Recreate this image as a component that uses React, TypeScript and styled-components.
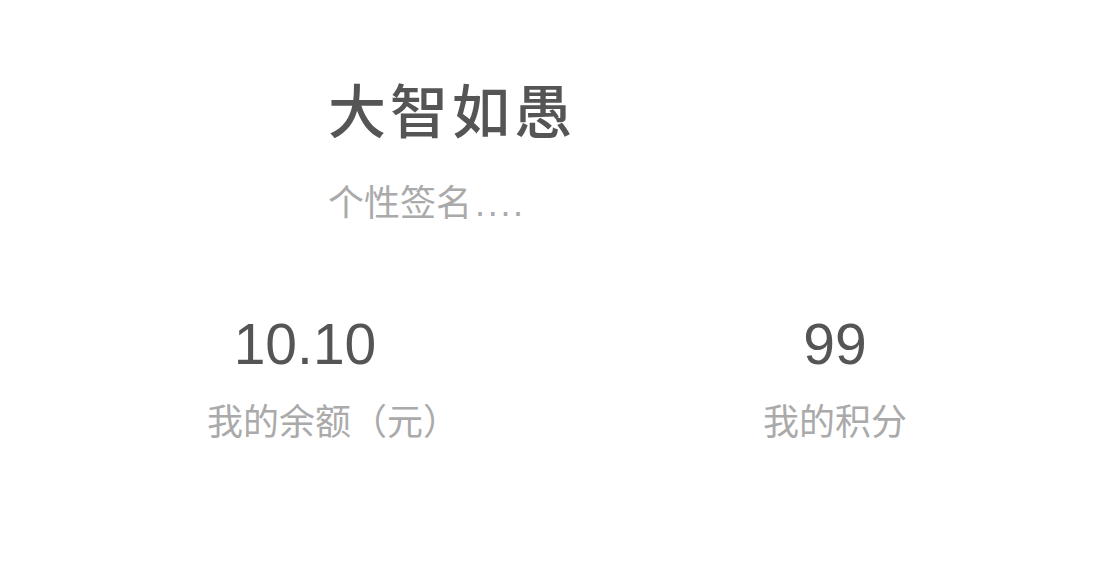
import React from "react";
import styled, { createGlobalStyle } from "styled-components";

const Global = createGlobalStyle`
  html, body { margin: 0; padding: 0; background: #fff; }
  body { font-family: "Liberation Sans", "Noto Sans CJK SC", sans-serif; }
`;

const Page = styled.div`
  width: 1113px;
  height: 566px;
  display: flex;
  flex-direction: column;
`;

const Profile = styled.div`
  display: flex;
  flex-direction: column;
  padding: 75px 0 0 328px;
`;

const Name = styled.h1`
  margin: 0;
  font-family: "Noto Sans CJK SC", sans-serif;
  font-size: 58px;
  line-height: 66px;
  font-weight: 500;
  letter-spacing: 4px;
  color: #555;
`;

const Signature = styled.div`
  margin-top: 39px;
  height: 40px;
  font-family: "Noto Sans CJK SC", sans-serif;
  font-size: 36px;
  line-height: 40px;
  color: #aaa;
`;

const Dots = styled.span`
  font-family: "Liberation Sans", sans-serif;
  line-height: 1;
  letter-spacing: 2.7px;
  margin-left: 3px;
`;

const Stats = styled.div`
  display: flex;
  justify-content: space-between;
  padding: 0 180px 0 207px;
  margin-top: 92px;
`;

const Stat = styled.div`
  width: 196px;
  display: flex;
  flex-direction: column;
  align-items: center;
`;

const Value = styled.div`
  font-family: "Liberation Sans", sans-serif;
  font-size: 57px;
  line-height: 64px;
  color: #555;
`;

const Label = styled.div<{ $overflow?: boolean }>`
  align-self: ${(p) => (p.$overflow ? "flex-start" : "center")};
  margin-top: 23px;
  font-family: "Noto Sans CJK SC", sans-serif;
  font-size: 36px;
  line-height: 40px;
  color: #aaa;
  white-space: nowrap;
`;

export default function App() {
  return (
    <Page>
      <Global />
      <Profile>
        <Name>大智如愚</Name>
        <Signature>
          个性签名<Dots>....</Dots>
        </Signature>
      </Profile>
      <Stats>
        <Stat>
          <Value>10.10</Value>
          <Label $overflow>我的余额（元）</Label>
        </Stat>
        <Stat>
          <Value>99</Value>
          <Label>我的积分</Label>
        </Stat>
      </Stats>
    </Page>
  );
}
